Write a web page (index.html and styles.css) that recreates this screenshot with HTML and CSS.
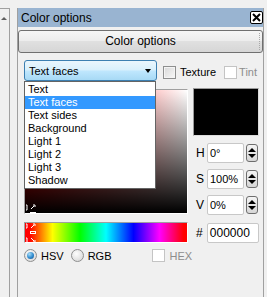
FILE: index.html
```html
<!DOCTYPE html>
<html lang="en">
<head>
  <meta charset="UTF-8">
  <title>Color options</title>
  <link rel="stylesheet" href="styles.css">
</head>
<body>
  <div class="app">
    <div class="side"><span class="side-arrow"></span></div>
    <div class="panel">
      <div class="titlebar">
        <span class="title">Color options</span>
        <span class="close">
          <svg width="9" height="9" viewBox="0 0 9 9"><path d="M1 1 L8 8 M8 1 L1 8" stroke="#000" stroke-width="2"/></svg>
        </span>
      </div>
      <div class="section-btn">Color options</div>
      <div class="content">
        <div class="top-row">
          <div class="combo-wrap">
            <div class="combo"><span>Text faces</span><span class="combo-arrow"></span></div>
            <ul class="combo-list">
              <li>Text</li>
              <li class="sel">Text faces</li>
              <li>Text sides</li>
              <li>Background</li>
              <li>Light 1</li>
              <li>Light 2</li>
              <li>Light 3</li>
              <li>Shadow</li>
            </ul>
          </div>
          <label class="check"><span class="box"></span>Texture</label>
          <label class="check off"><span class="box"></span>Tint</label>
        </div>
        <div class="main">
          <div class="left">
            <div class="sv">
              <svg class="marker sv-marker" width="12" height="9" viewBox="0 0 12 9">
                <path d="M1 1 H2 V6 H1" stroke="#fff" fill="none"/>
                <path d="M6 5 L9 2 M8 1 H10 V3" stroke="#fff" fill="none"/>
                <path d="M5 8.5 H11" stroke="#fff"/>
              </svg>
            </div>
            <div class="hue">
              <svg class="marker hue-marker" width="12" height="21" viewBox="0 0 12 21">
                <path d="M1 1 H2 V5 H1" stroke="#fff" fill="none"/>
                <path d="M6 5 L9 2 M8 1 H10 V3" stroke="#fff" fill="none"/>
                <rect x="5.5" y="8.5" width="5" height="2" stroke="#fff" fill="none"/>
                <path d="M1 15 H2 V20 H1" stroke="#fff" fill="none"/>
                <path d="M6 15 L9 18 M8 19 H10 V17" stroke="#fff" fill="none"/>
              </svg>
            </div>
            <div class="modes">
              <span class="radio on"></span><span class="mode-lbl">HSV</span>
              <span class="radio"></span><span class="mode-lbl">RGB</span>
              <label class="check off hex"><span class="box"></span>HEX</label>
            </div>
          </div>
          <div class="right">
            <div class="preview"></div>
            <div class="field">
              <span class="lbl">H</span><span class="input">0°</span>
              <span class="spin"><svg width="12" height="18" viewBox="0 0 12 18"><path d="M2 8 L6 4 L10 8 Z M2 10 L10 10 L6 14 Z" fill="#000"/></svg></span>
            </div>
            <div class="field">
              <span class="lbl">S</span><span class="input">100%</span>
              <span class="spin"><svg width="12" height="18" viewBox="0 0 12 18"><path d="M2 8 L6 4 L10 8 Z M2 10 L10 10 L6 14 Z" fill="#000"/></svg></span>
            </div>
            <div class="field">
              <span class="lbl">V</span><span class="input">0%</span>
              <span class="spin"><svg width="12" height="18" viewBox="0 0 12 18"><path d="M2 8 L6 4 L10 8 Z M2 10 L10 10 L6 14 Z" fill="#000"/></svg></span>
            </div>
            <div class="field hex-row">
              <span class="lbl">#</span><span class="input wide">000000</span>
            </div>
          </div>
        </div>
      </div>
    </div>
  </div>
</body>
</html>
```

FILE: styles.css
```css
body {
  margin: 0;
  width: 267px;
  height: 297px;
  overflow: hidden;
  background-color: #f0f0f0;
  font-family: "Liberation Sans", Arial, sans-serif;
  font-size: 11px;
  color: #000;
}
.app {
  display: flex;
  height: 297px;
}
.side {
  width: 9px;
  margin-top: 8px;
  border-top: 1px solid #a0a0a0;
  border-right: 1px solid #a0a0a0;
}
.side-arrow {
  display: block;
  width: 0;
  height: 0;
  margin: 8px 0 0 1px;
  border-left: 3px solid transparent;
  border-right: 3px solid transparent;
  border-bottom: 3px solid #606060;
}
.panel {
  width: 247px;
  box-sizing: border-box;
  margin-left: 7px;
  margin-top: 8px;
  border-left: 1px solid #a0a0a0;
  border-right: 1px solid #a0a0a0;
}
.titlebar {
  height: 19px;
  background-color: #99b4d1;
  display: flex;
  align-items: center;
  justify-content: space-between;
  padding-left: 3px;
  font-size: 12px;
}
.close {
  width: 13px;
  height: 13px;
  box-sizing: border-box;
  border: 1px solid #000;
  border-radius: 2px;
  background-color: #fff;
  display: flex;
  align-items: center;
  justify-content: center;
}
.close svg {
  display: block;
}
.section-btn {
  position: relative;
  margin-top: 3px;
  height: 23px;
  box-sizing: border-box;
  border: 1px solid #707070;
  border-radius: 3px;
  background: linear-gradient(#f6f6f6, #ececec 50%, #e0e0e0 50%, #d6d6d6);
  text-align: center;
  line-height: 21px;
  font-size: 12px;
}
.section-btn::after {
  content: "";
  position: absolute;
  right: 2px;
  top: 2px;
  bottom: 2px;
  border-left: 1px dotted #a8a8a8;
}
.content {
  padding: 7px 0 0 6px;
}
.top-row {
  display: flex;
  align-items: center;
  height: 21px;
}
.combo-wrap {
  position: relative;
  width: 133px;
  height: 21px;
}
.combo {
  height: 21px;
  box-sizing: border-box;
  border: 1px solid #3c7fb1;
  border-radius: 3px;
  background: linear-gradient(#eaf6fd, #d9f0fc 45%, #bee6fd 55%, #a7d9f5);
  display: flex;
  align-items: center;
  justify-content: space-between;
  padding: 0 5px 0 4px;
}
.combo-arrow {
  width: 0;
  height: 0;
  border-left: 3px solid transparent;
  border-right: 3px solid transparent;
  border-top: 4px solid #000;
}
.combo-list {
  position: absolute;
  z-index: 2;
  top: 21px;
  left: 0;
  width: 132px;
  box-sizing: border-box;
  margin: 0;
  padding: 1px 0;
  list-style: none;
  background-color: #fff;
  border: 1px solid #646464;
}
.combo-list li {
  height: 13px;
  line-height: 13px;
  padding-left: 3px;
}
.combo-list .sel {
  background-color: #3399ff;
  color: #fff;
}
.check {
  display: flex;
  align-items: center;
  gap: 4px;
  margin-left: 6px;
  margin-top: 3px;
}
.check.off {
  color: #8d8d8d;
  margin-left: 8px;
  gap: 2px;
}
.box {
  flex-shrink: 0;
  width: 13px;
  height: 13px;
  box-sizing: border-box;
  border: 1px solid #8e8f8f;
  background: linear-gradient(135deg, #d8d8d8, #f8f8f8);
  box-shadow: inset 0 0 0 1px #f4f4f4;
}
.check.off .box {
  border-color: #c4c4c4;
  background: #fff;
  box-shadow: none;
}
.main {
  display: flex;
  margin-top: 8px;
}
.left {
  width: 164px;
  flex-shrink: 0;
}
.sv {
  position: relative;
  height: 125px;
  box-sizing: border-box;
  border: 1px solid;
  border-color: #a0a0a0 #fff #fff #a0a0a0;
  background:
    linear-gradient(rgba(0, 0, 0, 0), #000),
    linear-gradient(to right, #f00, #fff);
}
.hue {
  position: relative;
  margin-top: 8px;
  height: 21px;
  box-sizing: border-box;
  border: 1px solid;
  border-color: #a0a0a0 #fff #fff #a0a0a0;
  background: linear-gradient(to right, #f00 3%, #ff0 17%, #0f0 34%, #0ff 50%, #00f 67%, #f0f 83%, #f00 98%);
}
.marker {
  position: absolute;
  left: 0;
}
.sv-marker {
  bottom: 0;
}
.hue-marker {
  top: 0;
}
.modes {
  display: flex;
  align-items: center;
  width: max-content;
  margin-top: 6px;
  height: 13px;
}
.modes > * {
  flex-shrink: 0;
}
.radio {
  position: relative;
  width: 13px;
  height: 13px;
  box-sizing: border-box;
  border: 1px solid #8e8f8f;
  border-radius: 50%;
  background: radial-gradient(circle at 40% 35%, #fdfdfd, #d2d2d2);
}
.radio.on::after {
  content: "";
  position: absolute;
  left: 2px;
  top: 2px;
  width: 7px;
  height: 7px;
  border-radius: 50%;
  background: radial-gradient(circle at 35% 30%, #a9dcf7, #2e8bcf 55%, #1a4f85);
}
.mode-lbl {
  margin: 0 7px 0 4px;
}
.check.hex {
  margin-left: 34px;
  margin-top: 0;
  gap: 4px;
}
.right {
  width: 66px;
  margin-left: 5px;
}
.preview {
  height: 48px;
  margin-top: -1px;
  box-sizing: border-box;
  border: 1px solid;
  border-color: #9a9a9a #dcdcdc #dcdcdc #9a9a9a;
  background-color: #000;
}
.field {
  display: flex;
  align-items: center;
  height: 20px;
  margin-top: 6px;
}
.preview + .field {
  margin-top: 7px;
}
.field.hex-row {
  margin-top: 8px;
}
.lbl {
  width: 11px;
  padding-left: 3px;
  font-size: 12px;
}
.input {
  width: 37px;
  height: 20px;
  box-sizing: border-box;
  border: 1px solid #c8c8c8;
  border-radius: 2px;
  background-color: #fff;
  padding-left: 2px;
  line-height: 18px;
}
.input.wide {
  width: 53px;
  font-size: 12px;
}
.spin {
  margin-left: 2px;
  width: 12px;
  height: 18px;
  box-sizing: border-box;
  border: 1px solid #6e6e6e;
  border-radius: 3px;
  background: linear-gradient(#f4f4f4, #d6d6d6);
  overflow: hidden;
}
.spin svg {
  display: block;
  margin: -1px 0 0 -1px;
}
```
